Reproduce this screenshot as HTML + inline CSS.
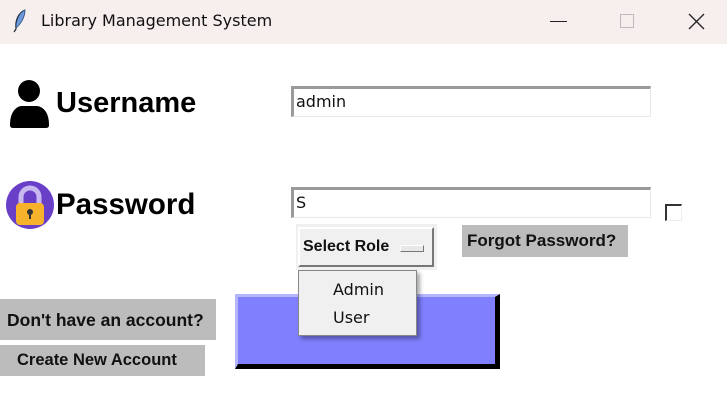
<!DOCTYPE html>
<html><head><style>
body{margin:0;width:727px;height:400px;background:#fff;position:relative;overflow:hidden;font-family:"Liberation Sans",sans-serif}
.a{position:absolute}
.tb{left:0;top:0;width:727px;height:44px;background:#f6efee}
.ent{background:#fff;border-top:3px solid #9a9a9a;border-left:3px solid #9a9a9a;border-right:1px solid #e8e8e8;border-bottom:1px solid #e8e8e8;box-sizing:border-box;font-size:16px;padding:3px 2px;color:#111;font-family:"DejaVu Sans",sans-serif}
.gb{background:#bcbcbc;font-weight:bold;color:#111;font-size:16px;box-sizing:border-box;white-space:nowrap}
</style></head><body>
<div class="a tb"></div>
<svg class="a" style="left:12px;top:9px" width="16" height="24" viewBox="0 0 16 24"><path d="M13 1C6 4 3 12 4 20L2 23" stroke="#222" stroke-width="1.2" fill="none"/><path d="M13 1C8 3 4 10 4 19C9 15 13 8 13 1Z" fill="#6d9ad8" stroke="#2a4c80" stroke-width="0.8"/></svg>
<div class="a" style="left:41px;top:11px;color:#111;font-family:'DejaVu Sans',sans-serif;font-size:16px">Library Management System</div>
<div class="a" style="left:550px;top:21px;width:17px;height:1px;background:#222"></div>
<div class="a" style="left:620px;top:14px;width:12px;height:12px;border:1px solid #bbb"></div>
<svg class="a" style="left:688px;top:13px" width="17" height="17"><path d="M1 1L16 16M16 1L1 16" stroke="#222" stroke-width="1.3"/></svg>

<svg class="a" style="left:9px;top:79px" width="42" height="49" viewBox="0 0 42 49"><circle cx="20" cy="12" r="11" fill="#000"/><path d="M1 46C1 32 8 27 13 27L27 27C33 27 40 32 40 46C40 48 39 49 37 49L4 49C2 49 1 48 1 46Z" fill="#000"/></svg>
<div class="a" style="left:56px;top:87px;font-size:29px;font-weight:bold;color:#000">Username</div>
<svg class="a" style="left:6px;top:181px" width="48" height="48" viewBox="0 0 48 48"><circle cx="24" cy="24" r="24" fill="#6a3fc8"/><path d="M15 24V16a9 9 0 0 1 18 0v8" stroke="#c9b8ef" stroke-width="5" fill="none"/><rect x="10" y="22" width="28" height="22" rx="4" fill="#f7b22c"/><circle cx="24" cy="31" r="3" fill="#333"/><rect x="23" y="31" width="2" height="7" fill="#333"/></svg>
<div class="a" style="left:56px;top:188px;font-size:29.5px;font-weight:bold;color:#000">Password</div>

<div class="a ent" style="left:291px;top:86px;width:360px;height:31px">admin</div>
<div class="a ent" style="left:291px;top:187px;width:360px;height:31px">S</div>
<div class="a" style="left:665px;top:204px;width:17px;height:17px;border-top:2px solid #333;border-left:2px solid #333;border-right:1px solid #eee;border-bottom:1px solid #eee;box-sizing:border-box"></div>

<div class="a" style="left:296px;top:224px;width:141px;height:46px;background:#f0f0f0"></div>
<div class="a gb" style="left:298px;top:227px;width:136px;height:40px;background:#f0f0f0;border-top:2px solid #fff;border-left:2px solid #fff;border-right:2px solid #777;border-bottom:2px solid #777;padding:9px 0 0 3px">Select Role</div>
<div class="a" style="left:400px;top:245px;width:22px;height:5px;background:#e8e8e8;border:1px solid #777;border-top-color:#fff;border-left-color:#fff"></div>
<div class="a gb" style="left:462px;top:225px;width:166px;height:32px;padding:6px 0 0 5px;font-size:17px">Forgot Password?</div>

<div class="a" style="left:235px;top:294px;width:265px;height:75px;background:#8080ff;border-top:3px solid #b4b4ff;border-left:3px solid #b4b4ff;border-right:5px solid #000;border-bottom:5px solid #000;box-sizing:border-box"></div>
<div class="a" style="left:298px;top:270px;width:119px;height:66px;background:#f0f0f0;border:1px solid #888;box-sizing:border-box;box-shadow:3px 3px 4px rgba(0,0,0,.35);font-family:'DejaVu Sans',sans-serif;font-size:16px;color:#111">
<div style="position:absolute;left:34px;top:9px">Admin</div><div style="position:absolute;left:34px;top:37px">User</div></div>

<div class="a gb" style="left:0;top:299px;width:216px;height:41px;padding:11px 0 0 7px;font-size:17.5px">Don't have an account?</div>
<div class="a gb" style="left:0;top:345px;width:205px;height:31px;padding:6px 0 0 17px;font-size:16.5px">Create New Account</div>
</body></html>
